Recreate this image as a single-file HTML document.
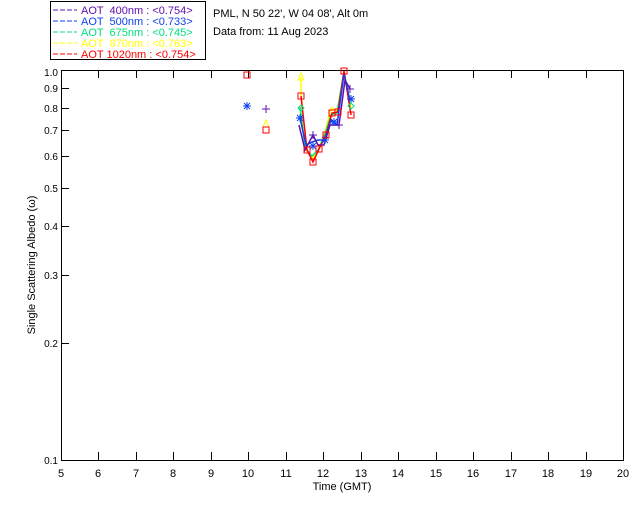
<!DOCTYPE html><html><head><style>body{margin:0;background:#fff}svg text{font-family:"Liberation Sans",sans-serif;font-size:11px;white-space:pre}</style></head><body>
<svg width="640" height="512" xmlns="http://www.w3.org/2000/svg">
<defs>
<g id="sq"><rect x="-3" y="-3" width="6" height="6" fill="none" stroke="#f00"/></g>
<g id="pl"><path d="M-4 0H4M0 -4V4" stroke="#6010b0"/></g>
<g id="st"><path d="M-4 0H4M0 -4V4M-3 -3L3 3M-3 3L3 -3" stroke="#1040f0"/></g>
<g id="di"><path d="M0 -3L3 0L0 3L-3 0Z" fill="none" stroke="#00e080"/></g>
<g id="tr"><path d="M0 -4L3 3H-3Z" fill="none" stroke="#ff0"/></g>
</defs>
<rect x="50.5" y="1.5" width="155" height="58" fill="none" stroke="#000"/>
<g>
<line x1="53" y1="10" x2="77" y2="10" stroke="#6010b0" stroke-dasharray="5,2"/><text x="81" y="14" fill="#6010b0">AOT  400nm : &lt;0.754&gt;</text>
<line x1="53" y1="21" x2="77" y2="21" stroke="#1040f0" stroke-dasharray="5,2"/><text x="81" y="25" fill="#1040f0">AOT  500nm : &lt;0.733&gt;</text>
<line x1="53" y1="32" x2="77" y2="32" stroke="#00e080" stroke-dasharray="5,2"/><text x="81" y="36" fill="#00e080">AOT  675nm : &lt;0.745&gt;</text>
<line x1="53" y1="43" x2="77" y2="43" stroke="#ff0" stroke-dasharray="5,2"/><text x="81" y="47" fill="#ff0">AOT  870nm : &lt;0.763&gt;</text>
<line x1="53" y1="54" x2="77" y2="54" stroke="#f00" stroke-dasharray="5,2"/><text x="81" y="58" fill="#f00">AOT 1020nm : &lt;0.754&gt;</text>
</g>
<text x="213" y="17" fill="#000">PML, N 50 22', W 04 08', Alt 0m</text>
<text x="213" y="35" fill="#000">Data from: 11 Aug 2023</text>
<rect x="61.5" y="70.5" width="562" height="390" fill="none" stroke="#000"/>
<g stroke="#000">
<path d="M98.5 70v8M136.5 70v8M173.5 70v8M211.5 70v8M248.5 70v8M286.5 70v8M323.5 70v8M361.5 70v8M398.5 70v8M436.5 70v8M473.5 70v8M511.5 70v8M548.5 70v8M586.5 70v8"/>
<path d="M98.5 460v-8M136.5 460v-8M173.5 460v-8M211.5 460v-8M248.5 460v-8M286.5 460v-8M323.5 460v-8M361.5 460v-8M398.5 460v-8M436.5 460v-8M473.5 460v-8M511.5 460v-8M548.5 460v-8M586.5 460v-8"/>
<path d="M61 88.5h8M61 108.5h8M61 130.5h8M61 156.5h8M61 188.5h8M61 226.5h8M61 275.5h8M61 343.5h8"/>
</g>
<g text-anchor="end">
<text x="58" y="76" style="font-size:10px">1.0</text><text x="58" y="92" style="font-size:10px">0.9</text><text x="58" y="112" style="font-size:10px">0.8</text><text x="58" y="134" style="font-size:10px">0.7</text><text x="58" y="160" style="font-size:10px">0.6</text><text x="58" y="192" style="font-size:10px">0.5</text><text x="58" y="230" style="font-size:10px">0.4</text><text x="58" y="279" style="font-size:10px">0.3</text><text x="58" y="347" style="font-size:10px">0.2</text><text x="58" y="464" style="font-size:10px">0.1</text>
</g>
<g text-anchor="middle" style="font-size:10px">
<text x="61" y="477">5</text><text x="98" y="477">6</text><text x="136" y="477">7</text><text x="173" y="477">8</text><text x="211" y="477">9</text><text x="248" y="477">10</text><text x="286" y="477">11</text><text x="323" y="477">12</text><text x="361" y="477">13</text><text x="398" y="477">14</text><text x="436" y="477">15</text><text x="473" y="477">16</text><text x="511" y="477">17</text><text x="548" y="477">18</text><text x="586" y="477">19</text><text x="623" y="477">20</text>
<text x="342" y="490">Time (GMT)</text>
<text transform="translate(35 265) rotate(-90)">Single Scattering Albedo (ω)</text>
</g>
<g fill="none" stroke-width="1.5">
<polyline stroke="#ff0" points="301,77 301,96 306,150 313,158 319,149 325,132 331,108 337,111 344,71 351,108"/>
<polyline stroke="#00e080" points="300,107 305,148 312,156 318,150 325,134 331,115 337,113 344,72 350,105"/>
<polyline stroke="#f00" points="301,96 307,150 313,162 319,149 326,135 332,113 338,112 344,71 351,115"/>
<polyline stroke="#1040f0" points="300,118 306,145 312,142 318,140 325,140 331,120 337,125 344,74 350,100"/>
<polyline stroke="#6010b0" points="299,125 305,150 313,135 318,145 324,145 330,125 339,125 345,80 350,89"/>
</g>
<use href="#sq" x="247" y="75"/><use href="#st" x="247" y="106"/><use href="#pl" x="266" y="109"/>
<use href="#tr" x="266" y="124"/><use href="#sq" x="266" y="130"/>
<use href="#tr" x="301" y="77"/><use href="#di" x="301" y="108"/><use href="#st" x="300" y="118"/>
<use href="#pl" x="313" y="135"/><use href="#st" x="313" y="146"/><use href="#pl" x="339" y="125"/><use href="#pl" x="350" y="89"/><use href="#st" x="351" y="99"/><use href="#di" x="351" y="106"/>
<use href="#st" x="334" y="122"/><use href="#st" x="325" y="140"/>
<use href="#sq" x="301" y="96"/><use href="#sq" x="307" y="150"/><use href="#sq" x="313" y="162"/><use href="#sq" x="319" y="149"/><use href="#sq" x="326" y="135"/><use href="#sq" x="332" y="113"/><use href="#sq" x="338" y="112"/><use href="#sq" x="344" y="71"/><use href="#sq" x="351" y="115"/>
</svg></body></html>
